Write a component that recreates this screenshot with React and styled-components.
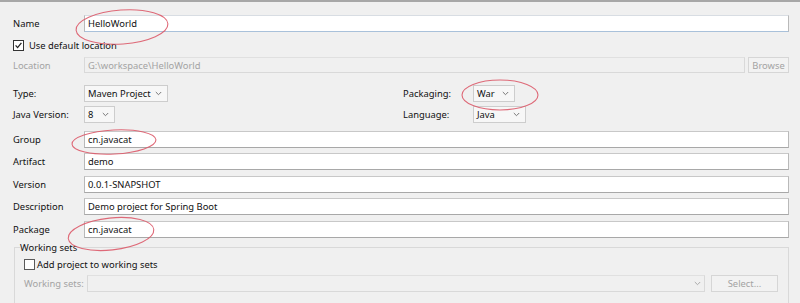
import React from "react";
import styled, { createGlobalStyle } from "styled-components";

const Global = createGlobalStyle`
  html, body { margin: 0; padding: 0; background: #f0f0f0; }
  body { font-family: "Noto Sans", "Noto Sans CJK SC", sans-serif; font-size: 9.4px; color: #111; }
`;

const Page = styled.div`
  position: relative;
  width: 800px;
  height: 303px;
  box-sizing: border-box;
  border-top: 2px solid #a7a7a7;
  background: #f0f0f0;
  overflow: hidden;
  display: flex;
  flex-direction: column;
  padding: 0 11px 0 13px;
`;

const Row = styled.div`
  display: flex;
  align-items: center;
  height: ${(p) => p.$h || 17}px;
  margin-top: ${(p) => p.$mt || 0}px;
  flex-shrink: 0;
  white-space: nowrap;
`;

const Label = styled.span`
  width: ${(p) => p.$w || 71}px;
  flex-shrink: 0;
  color: ${(p) => (p.$disabled ? "#a3a3a3" : "#111")};
  white-space: nowrap;
  line-height: 17px;
`;

const Input = styled.div`
  flex: 1;
  height: 100%;
  box-sizing: border-box;
  background: ${(p) => (p.$disabled ? "#f0f0f0" : "#ffffff")};
  border: 1px solid ${(p) => (p.$disabled ? "#d9d9d9" : "#b9b9b9")};
  border-bottom-color: ${(p) => (p.$focus ? "#a9c1da" : p.$disabled ? "#d9d9d9" : "#a8a8a8")};
  border-top-color: ${(p) => (p.$focus ? "#d8dde3" : p.$disabled ? "#e0e0e0" : "#c8c8c8")};
  color: ${(p) => (p.$disabled ? "#a3a3a3" : "#111")};
  padding: 0 3px;
  line-height: 15px;
  white-space: nowrap;
  display: flex;
  align-items: center;
  justify-content: space-between;
`;

const Button = styled.div`
  width: ${(p) => p.$w}px;
  margin-left: ${(p) => p.$ml}px;
  height: 100%;
  box-sizing: border-box;
  border: 1px solid #d6d6d6;
  background: #f2f2f2;
  color: #a3a3a3;
  display: flex;
  align-items: center;
  justify-content: center;
  flex-shrink: 0;
`;

const Select = styled.div`
  width: ${(p) => p.$w}px;
  height: 100%;
  box-sizing: border-box;
  border: 1px solid #cdcdcd;
  background: #f7f7f7;
  display: flex;
  align-items: center;
  justify-content: space-between;
  padding: 0 5px 0 3px;
  flex-shrink: 0;
  color: #111;
  white-space: nowrap;
`;

const Half = styled.div`
  display: flex;
  align-items: center;
  height: 100%;
  width: ${(p) => p.$w}px;
  flex-shrink: 0;
`;

const Box = styled.span`
  width: 11px;
  height: 11px;
  box-sizing: border-box;
  border: 1px solid ${(p) => (p.$light ? "#5a5a5a" : "#333")};
  background: #fff;
  margin-right: ${(p) => p.$mr || 5}px;
  display: inline-flex;
  align-items: center;
  justify-content: center;
  flex-shrink: 0;
`;

const Group = styled.fieldset`
  margin: 3px 0 0 1px;
  padding: 0 0 0 9px;
  border: 1px solid #d9d9d9;
  border-bottom: none;
  height: 80px;
  flex-shrink: 0;
  box-sizing: border-box;
  min-width: 0;
`;

const Legend = styled.legend`
  padding: 0;
  margin-left: -4px;
  line-height: 13px;
  color: #111;
`;

const Overlay = styled.svg`
  position: absolute;
  left: 0;
  top: 0;
  pointer-events: none;
`;

const Chevron = ({ color = "#777" }) => (
  <svg width="7" height="5" viewBox="0 0 7 5">
    <path d="M0.8 1 L3.5 3.7 L6.2 1" fill="none" stroke={color} strokeWidth="1" />
  </svg>
);

export default function App() {
  return (
    <>
      <Global />
      <Page>
        <Row $mt={13}>
          <Label>Name</Label>
          <Input $focus>HelloWorld</Input>
        </Row>
        <Row $mt={7} $h={12}>
          <Box>
            <svg width="9" height="9" viewBox="0 0 9 9">
              <path d="M1.6 4.4 L3.6 6.6 L7.4 1.8" fill="none" stroke="#222" strokeWidth="1.3" />
            </svg>
          </Box>
          <span>Use default location</span>
        </Row>
        <Row $mt={6} $h={16}>
          <Label $disabled>Location</Label>
          <Input $disabled>G:\workspace\HelloWorld</Input>
          <Button $w={41} $ml={3}>Browse</Button>
        </Row>
        <Row $mt={12}>
          <Half $w={390}>
            <Label>Type:</Label>
            <Select $w={84}>Maven Project <Chevron /></Select>
          </Half>
          <Label $w={70}>Packaging:</Label>
          <Select $w={42}>War <Chevron /></Select>
        </Row>
        <Row $mt={4}>
          <Half $w={390}>
            <Label>Java Version:</Label>
            <Select $w={31}>8 <Chevron /></Select>
          </Half>
          <Label $w={70}>Language:</Label>
          <Select $w={53}>Java <Chevron /></Select>
        </Row>
        <Row $mt={8}>
          <Label>Group</Label>
          <Input>cn.javacat</Input>
        </Row>
        <Row $mt={5}>
          <Label>Artifact</Label>
          <Input>demo</Input>
        </Row>
        <Row $mt={6}>
          <Label>Version</Label>
          <Input>0.0.1-SNAPSHOT</Input>
        </Row>
        <Row $mt={5}>
          <Label>Description</Label>
          <Input>Demo project for Spring Boot</Input>
        </Row>
        <Row $mt={6}>
          <Label>Package</Label>
          <Input>cn.javacat</Input>
        </Row>
        <Group>
          <Legend>Working sets</Legend>
          <Row $mt={4} $h={12}>
            <Box $mr={2} $light />
            <span>Add project to working sets</span>
          </Row>
          <Row $mt={5}>
            <Label $w={63} $disabled>Working sets:</Label>
            <Input $disabled>
              <span />
              <Chevron color="#aaa" />
            </Input>
            <Button $w={67} $ml={6}>Select...</Button>
            <span style={{ width: 10 }} />
          </Row>
        </Group>
        <Overlay width="800" height="303" viewBox="0 0 800 303">
          <g fill="none" stroke="#dc5a6a" strokeWidth="1.1" opacity="0.9">
            <ellipse cx="122" cy="25" rx="46" ry="17" transform="rotate(-4 122 25)" />
            <ellipse cx="500" cy="93" rx="38" ry="15" />
            <ellipse cx="114" cy="140" rx="42" ry="12" transform="rotate(-3 114 140)" />
            <ellipse cx="111" cy="232" rx="43" ry="16" transform="rotate(-6 111 232)" />
          </g>
        </Overlay>
      </Page>
    </>
  );
}
